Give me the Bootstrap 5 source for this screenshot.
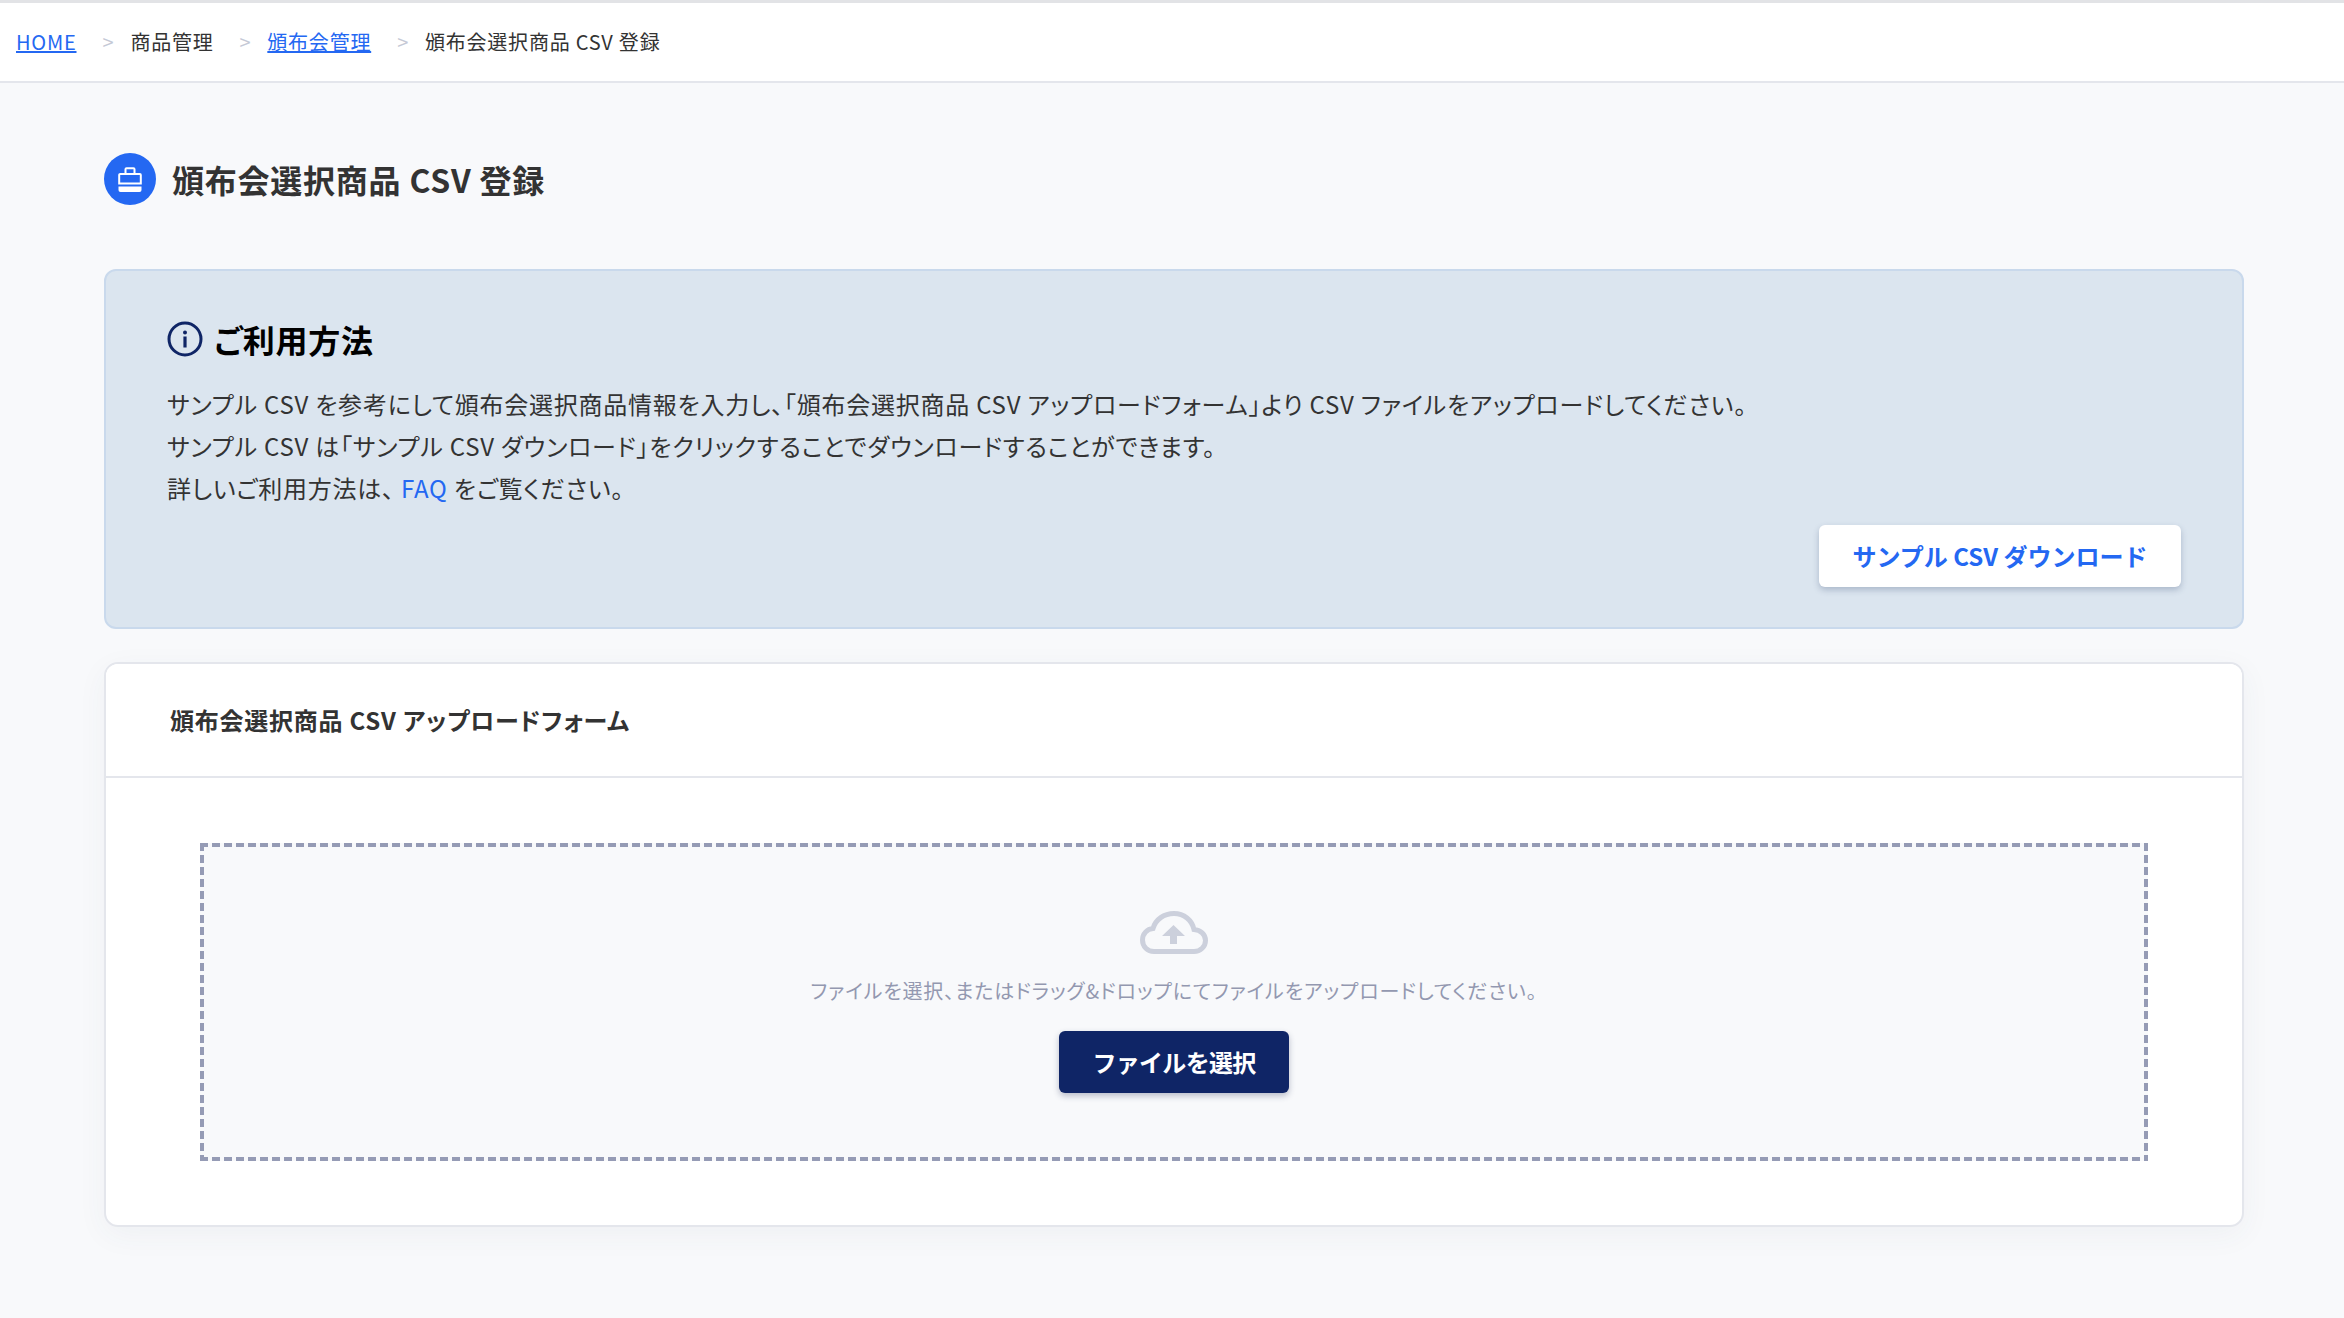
<!DOCTYPE html>
<html lang="ja">
<head>
<meta charset="utf-8">
<title>頒布会選択商品 CSV 登録</title>
<link rel="stylesheet" href="https://cdn.jsdelivr.net/npm/bootstrap@5.3.0/dist/css/bootstrap.min.css">
<style>
html,body{height:100%}
body{background:#f8f9fb;font-family:"Noto Sans CJK JP","Noto Sans",sans-serif;color:#333;font-size:24px;letter-spacing:.032em;font-feature-settings:"palt"}
a{color:#2468f2}
.crumbbar{background:#fff;border-top:3px solid #e2e3e6;border-bottom:2px solid #e4e6ec;height:83px;padding-left:16px;line-height:1}
.crumbbar .breadcrumb{--bs-breadcrumb-divider:">";--bs-breadcrumb-margin-bottom:0;--bs-breadcrumb-item-padding-x:16px;--bs-breadcrumb-divider-color:#c5c9d6;--bs-breadcrumb-item-active-color:#333;font-size:20px}
.crumbbar .breadcrumb-item+.breadcrumb-item{padding-left:26px}
.pagewrap{padding:0 100px 0 104px}
.titlerow{height:186px;gap:16px;padding-top:6px}
.titleicon{width:52px;height:52px;background:#2468f2}
.pagetitle{font-size:32px;font-weight:700;margin:0;color:#333}
.guide{background:#dbe5ef;border:2px solid #c9d9ec;border-radius:12px;padding:44px 61px 39px 61px;height:360px}
.guidehead{font-size:32px;font-weight:700;color:#000;gap:11px;margin-bottom:20px;line-height:48px}
.guideline{line-height:42px;margin:0;color:#333}
.samplerow{margin-top:16px}
.btn-sample{background:#fff;color:#2468f2;font-size:24px;font-weight:700;width:362px;height:62px;border:0;border-radius:6px;box-shadow:0 3px 6px rgba(60,80,120,.3);padding:0;letter-spacing:0}
.formcard{margin-top:33px;height:565px;border:2px solid #e4e6ec;border-radius:14px;box-shadow:0 8px 30px rgba(60,70,100,.05)}
.formcard .card-header{background:#fff;border-bottom:2px solid #e4e6ec;height:114px;padding:0 64px;font-size:24px;font-weight:700;color:#333;border-radius:12px 12px 0 0}
.formcard .card-body{padding:65px 94px 64px}
.dropzone{height:318px;padding-top:68px;background:linear-gradient(90deg,#959bb5 8px,transparent 0) top left/12px 4px repeat-x,linear-gradient(90deg,#959bb5 8px,transparent 0) bottom left/12px 4px repeat-x,linear-gradient(#959bb5 8px,transparent 0) top left/4px 12px repeat-y,linear-gradient(#959bb5 8px,transparent 0) top right/4px 12px repeat-y,#f8f9fb}
.droptext{font-size:20px;letter-spacing:.042em;color:#9398b0;margin:23px 0 26px;line-height:28px}
.btn-pick{background:#0f2566;color:#fff;font-size:24px;font-weight:700;width:230px;height:62px;border:0;border-radius:6px;box-shadow:0 3px 6px rgba(40,50,90,.3);padding:0;letter-spacing:-.03em}
.btn-pick:hover{background:#0f2566;color:#fff}
</style>
</head>
<body>
<nav class="crumbbar d-flex align-items-center" aria-label="breadcrumb">
  <ol class="breadcrumb">
    <li class="breadcrumb-item"><a href="#">HOME</a></li>
    <li class="breadcrumb-item active">商品管理</li>
    <li class="breadcrumb-item"><a href="#">頒布会管理</a></li>
    <li class="breadcrumb-item active">頒布会選択商品 CSV 登録</li>
  </ol>
</nav>
<main class="pagewrap">
  <div class="titlerow d-flex align-items-center">
    <span class="titleicon rounded-circle d-flex align-items-center justify-content-center">
      <svg width="24" height="25" viewBox="0 0 24 25" fill="none"><path d="M7.500 7V2.200a1 1 0 0 1 1-1h7a1 1 0 0 1 1 1V7" stroke="#fff" stroke-width="2"/><path d="M1.200 16.500V8a1 1 0 0 1 1-1h19.600a1 1 0 0 1 1 1v8.500z" stroke="#fff" stroke-width="2"/><path d="M0.500 19.500h23V23a2 2 0 0 1-2 2h-19a2 2 0 0 1-2-2z" fill="#fff"/></svg>
    </span>
    <h1 class="pagetitle">頒布会選択商品 CSV 登録</h1>
  </div>
  <section class="guide">
    <div class="guidehead d-flex align-items-center">
      <svg width="36" height="36" viewBox="0 0 36 36" fill="none"><circle cx="18" cy="18" r="16" stroke="#0f2566" stroke-width="3"/><circle cx="18" cy="11.500" r="2" fill="#0f2566"/><rect x="16.400" y="15.500" width="3.200" height="11" fill="#0f2566"/></svg>
      <span>ご利用方法</span>
    </div>
    <p class="guideline">サンプル CSV を参考にして頒布会選択商品情報を入力し、「頒布会選択商品 CSV アップロードフォーム」より CSV ファイルをアップロードしてください。</p>
    <p class="guideline">サンプル CSV は「サンプル CSV ダウンロード」をクリックすることでダウンロードすることができます。</p>
    <p class="guideline">詳しいご利用方法は、 <a href="#" class="text-decoration-none">FAQ</a> をご覧ください。</p>
    <div class="samplerow d-flex justify-content-end">
      <button type="button" class="btn btn-sample">サンプル CSV ダウンロード</button>
    </div>
  </section>
  <section class="card formcard">
    <div class="card-header d-flex align-items-center">頒布会選択商品 CSV アップロードフォーム</div>
    <div class="card-body">
      <div class="dropzone d-flex flex-column align-items-center">
        <svg width="68" height="43" viewBox="0 0 68 43" fill="none"><path d="M14 40.500C7.500 40.500 2.500 35.500 2.500 29c0-6 4.500-11 10.500-11.500C15.500 8.500 24 2.500 34 2.500c10 0 18 6.500 20 16 6.500 .5 11.500 5 11.500 11 0 6-5 11-11.500 11z" stroke="#ccd0dc" stroke-width="5"/><path d="M33.500 14 45 25h-8v8h-7v-8h-8z" fill="#ccd0dc"/></svg>
        <p class="droptext">ファイルを選択、またはドラッグ&amp;ドロップにてファイルをアップロードしてください。</p>
        <button type="button" class="btn btn-pick">ファイルを選択</button>
      </div>
    </div>
  </section>
</main>
<script src="https://cdn.jsdelivr.net/npm/bootstrap@5.3.0/dist/js/bootstrap.bundle.min.js"></script>
</body>
</html>
